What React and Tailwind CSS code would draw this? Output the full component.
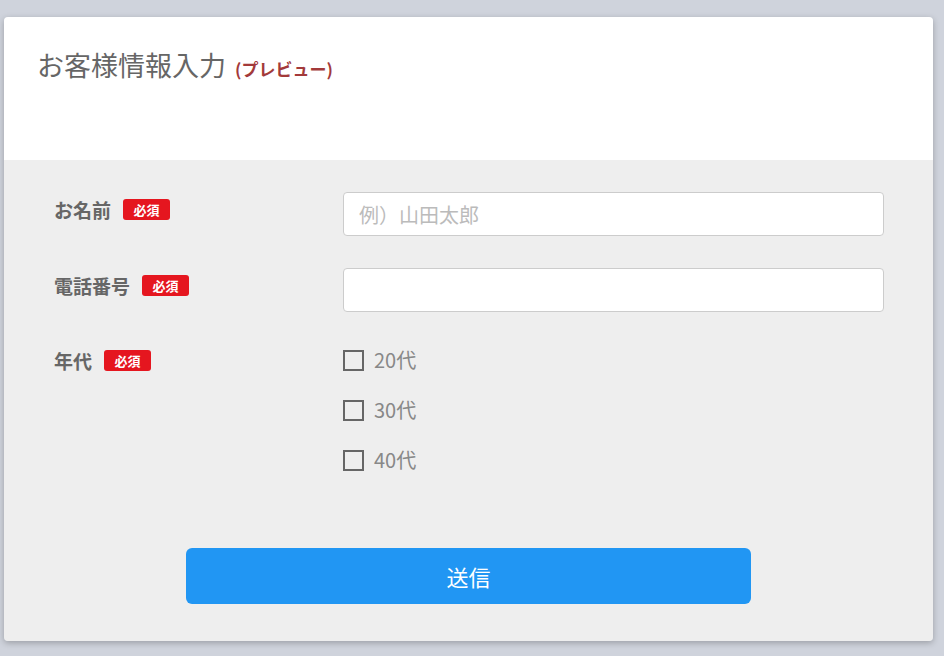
import React from "react";

const font = { fontFamily: '"Noto Sans CJK JP", "Noto Sans", sans-serif' };

function Badge() {
  return (
    <span className="ml-[12px] inline-flex h-[21px] w-[47px] items-center justify-center rounded-[3px] bg-[#e5161f] text-[13px] font-bold leading-none text-white">
      必須
    </span>
  );
}

function Label({ children }) {
  return (
    <div className="flex h-[34px] items-center text-[19px] font-bold leading-none text-[#666666]">
      <span>{children}</span>
      <Badge />
    </div>
  );
}

export default function App() {
  return (
    <div className="min-h-[656px] w-full bg-[#cfd3dc] pl-[4px] pt-[17px]" style={font}>
      <div className="w-[929px] overflow-hidden rounded-[4px] shadow-[0_2px_6px_rgba(0,0,0,0.25)]">
        <div className="h-[143px] bg-white pl-[33px] pt-[28px]">
          <div className="flex items-baseline">
            <span className="text-[27px] text-[#666666]">お客様情報入力</span>
            <span className="ml-[9px] text-[17px] font-bold text-[#a33a3a]">(プレビュー)</span>
          </div>
        </div>
        <div className="bg-[#eeeeee] pb-[37px] pl-[50px] pr-[49px] pt-[32px]">
          <div className="flex flex-col gap-[32px]">
            <div className="flex">
              <div className="w-[289px]">
                <Label>お名前</Label>
              </div>
              <input
                className="h-[44px] w-[541px] rounded-[4px] border border-[#cccccc] bg-white px-[15px] text-[20px] text-[#666] outline-none placeholder:text-[#bbbbbb]"
                placeholder="例）山田太郎"
                style={font}
              />
            </div>
            <div className="flex">
              <div className="w-[289px]">
                <Label>電話番号</Label>
              </div>
              <input
                className="h-[44px] w-[541px] rounded-[4px] border border-[#cccccc] bg-white px-[15px] text-[20px] text-[#666] outline-none"
                style={font}
              />
            </div>
            <div className="flex">
              <div className="w-[289px]">
                <div className="flex h-[32px] items-center text-[19px] font-bold leading-none text-[#666666]">
                  <span>年代</span>
                  <Badge />
                </div>
              </div>
              <div className="flex flex-col gap-[18px]">
                {["20代", "30代", "40代"].map((t) => (
                  <div key={t} className="flex h-[32px] items-center">
                    <span className="h-[21px] w-[21px] border-2 border-[#666666] bg-transparent" />
                    <span className="ml-[10px] text-[20px] leading-none text-[#888888]">{t}</span>
                  </div>
                ))}
              </div>
            </div>
          </div>
          <div className="mt-[72px] flex justify-center pr-[1px]">
            <button
              className="h-[56px] w-[565px] rounded-[6px] bg-[#2196f3] text-[22px] text-white"
              style={font}
            >
              送信
            </button>
          </div>
        </div>
      </div>
    </div>
  );
}
